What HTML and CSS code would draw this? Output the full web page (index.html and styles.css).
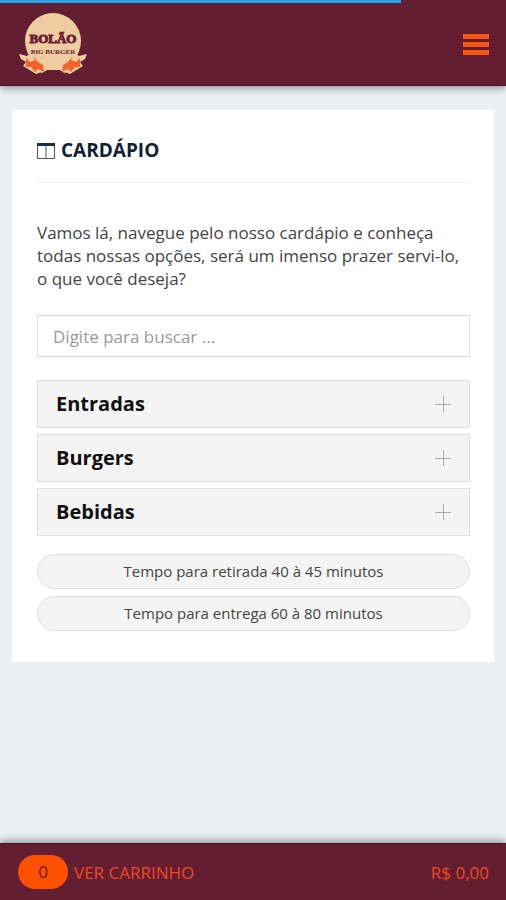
FILE: index.html
```html
<!DOCTYPE html>
<html lang="pt-BR">
<head>
<meta charset="utf-8">
<meta name="viewport" content="width=device-width, initial-scale=1">
<title>Bolão Big Burger - Cardápio</title>
<link rel="stylesheet" href="styles.css">
</head>
<body>
<header class="topbar">
  <div class="progress"></div>
  <a class="brand" href="#">
    <svg class="logo" viewBox="0 0 70 64" role="img" aria-label="Bolão Big Burger">
      <circle cx="35" cy="29" r="28" fill="#efcda0"/>
      <path d="M15 47H55L54 58L46 61L42 58H29L24 61L16 58Z" fill="#efcda0"/>
      <path d="M1 42L9 44L14 40L19 47L25 50L26 59L18 62L10 57L5 54L8 50L3 47ZM69 42L61 44L56 40L51 47L45 50L44 59L52 62L60 57L65 54L62 50L67 47Z" fill="#efcda0"/>
      <path d="M8 46L12 50L17 48L15 44L20 50L25 53L26 60L20 57L17 60L13 55L8 55ZM62 46L58 50L53 48L55 44L50 50L45 53L44 60L50 57L53 60L57 55L62 55Z" fill="#f4622b"/>
      <text class="logo-name" x="35" y="31" text-anchor="middle">BOLÃO</text>
      <text class="logo-sub" x="35" y="42" text-anchor="middle">BIG BURGER</text>
    </svg>
  </a>
  <button class="menu" type="button" aria-label="Menu"><span></span><span></span><span></span></button>
</header>
<main class="card">
  <h1 class="title">
    <svg class="title-icon" viewBox="0 0 18 16" aria-hidden="true"><path d="M.5 2V15.500H17.500V2M9 2V15.500" fill="none" stroke="#4c5966"/><path d="M0 0H18V3H0Z" fill="#183144"/></svg>
    CARDÁPIO
  </h1>
  <p class="intro">Vamos lá, navegue pelo nosso cardápio e conheça todas nossas opções, será um imenso prazer servi-lo, o que você deseja?</p>
  <input class="search" type="search" placeholder="Digite para buscar ..." aria-label="Buscar no cardápio">
  <div class="categories">
    <button class="category" type="button">Entradas<span class="plus"></span></button>
    <button class="category" type="button">Burgers<span class="plus"></span></button>
    <button class="category" type="button">Bebidas<span class="plus"></span></button>
  </div>
  <div class="times">
    <div class="time">Tempo para retirada 40 à 45 minutos</div>
    <div class="time">Tempo para entrega 60 à 80 minutos</div>
  </div>
</main>
<footer class="cartbar">
  <a class="cart" href="#"><span class="count">0</span>VER CARRINHO</a>
  <span class="total">R$ 0,00</span>
</footer>
</body>
</html>
```
FILE: styles.css
```css
* { box-sizing: border-box; }
body {
  margin: 0;
  min-height: 100vh;
  display: flex;
  flex-direction: column;
  background: #ecf0f3;
  color: #444;
  font-family: "Open Sans", "Noto Sans", sans-serif;
}
button { font: inherit; cursor: pointer; }
.topbar {
  position: relative;
  display: flex;
  align-items: center;
  justify-content: space-between;
  padding: 12px 17px 9px 18px;
  background: #641e32;
  border-bottom: 1px solid #560c25;
  box-shadow: 0 2px 8px rgba(40, 50, 50, .5);
}
.progress {
  position: absolute;
  top: 0;
  left: 0;
  width: 79.2%;
  height: 3px;
  background: #29a1e5;
}
.brand { display: block; }
.logo { display: block; width: 70px; height: 64px; }
.logo-name, .logo-sub {
  font-family: "Liberation Serif", serif;
  font-weight: bold;
  fill: #6b2035;
}
.logo-name { font-size: 13px; stroke: #6b2035; stroke-width: 1px; }
.logo-sub { font-size: 7px; }
.menu {
  display: flex;
  flex-direction: column;
  gap: 3px;
  width: 26px;
  padding: 0;
  border: 0;
  background: none;
}
.menu span { height: 5px; background: #f9560f; }
.card {
  margin: 24px 12px;
  padding: 26px 24px 31px 25px;
  background: #fff;
}
.title {
  display: flex;
  align-items: center;
  gap: 6px;
  margin: 0 0 38px;
  padding-bottom: 17px;
  border-bottom: 1px solid #eee;
  color: #0e2233;
  font-size: 19px;
  line-height: 29px;
}
.title-icon { width: 18px; height: 16px; }
.intro { margin: 0 0 25px; font-size: 17px; line-height: 23px; }
.search {
  display: block;
  width: 100%;
  height: 42px;
  margin-bottom: 23px;
  padding: 0 15px;
  border: 1px solid #d9dddf;
  border-radius: 0;
  background: #fff;
  color: #444;
  font: 17px "Open Sans", sans-serif;
  appearance: none;
}
.search::placeholder { color: #999; opacity: 1; }
.categories { display: grid; gap: 6px; margin-bottom: 18px; }
.category {
  display: flex;
  align-items: center;
  justify-content: space-between;
  height: 48px;
  padding: 0 18px;
  border: 1px solid #dfe0e1;
  background: #f4f4f4;
  color: #111;
  font-size: 20px;
  font-weight: bold;
  line-height: 26px;
}
.plus {
  width: 16px;
  height: 16px;
  background:
    linear-gradient(#aaa, #aaa) center / 16px 1px no-repeat,
    linear-gradient(#aaa, #aaa) center / 1px 16px no-repeat;
}
.times { display: grid; gap: 7px; }
.time {
  padding: 6px 16px;
  border: 1px solid #dfe0e1;
  border-radius: 18px;
  background: #f4f4f4;
  font-size: 15px;
  line-height: 21px;
  text-align: center;
}
.cartbar {
  display: flex;
  align-items: center;
  justify-content: space-between;
  height: 57px;
  margin-top: auto;
  padding: 0 17px 0 18px;
  border-top: 1px solid #560c25;
  background: #641e32;
  box-shadow: 0 -2px 8px rgba(40, 50, 50, .5);
  color: #f2481f;
  font-size: 17px;
}
.cart { display: flex; align-items: center; gap: 6px; color: inherit; text-decoration: none; }
.count {
  width: 50px;
  border-radius: 17px;
  background: #ff5000;
  color: #641e32;
  line-height: 34px;
  text-align: center;
}
```
